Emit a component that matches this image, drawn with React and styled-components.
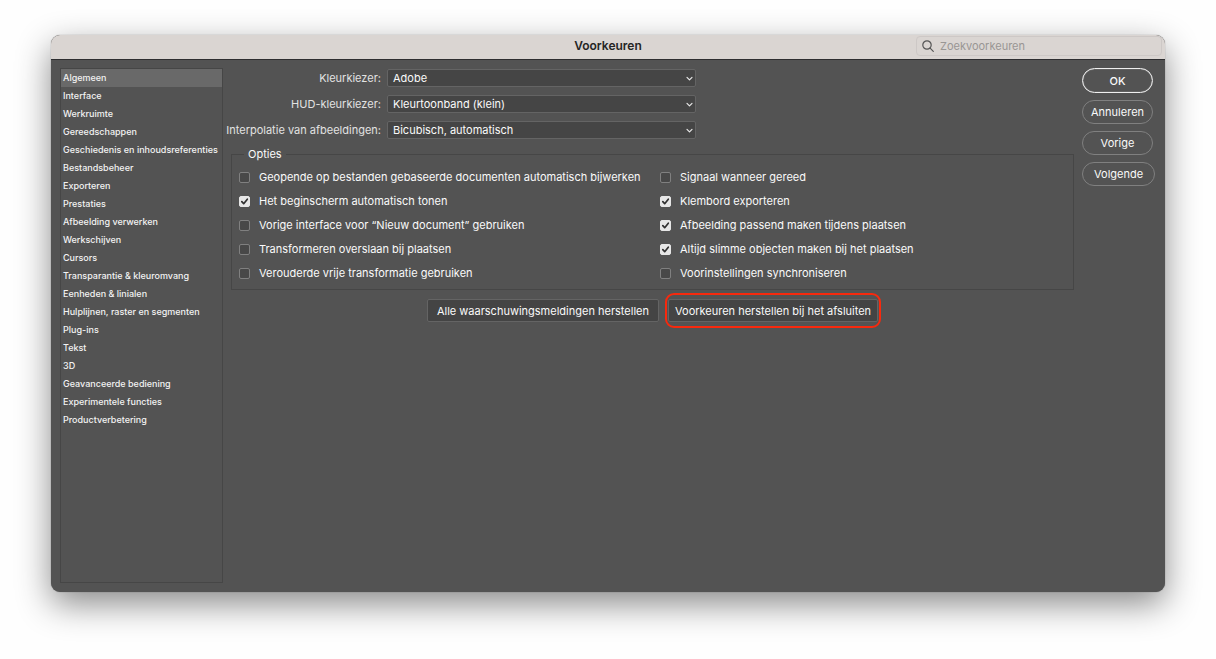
import React, { useState } from "react";
import styled, { createGlobalStyle, css } from "styled-components";

const GlobalStyle = createGlobalStyle`
  *, *::before, *::after { box-sizing: border-box; }
  body { margin: 0; background: #fefefe; }
  body, button, input, select { font-family: Inter, "Liberation Sans", sans-serif; }
`;

const Page = styled.div`
  display: flex;
  min-height: 100vh;
  padding: 35px 51px 67px;
`;

const Dialog = styled.main`
  flex: 1;
  display: flex;
  flex-direction: column;
  border-radius: 9px;
  background: #535353;
  color: #fafafa;
  font-size: 11px;
  font-weight: 400;
  line-height: 16px;
  box-shadow: 0 0 1px rgba(0, 0, 0, 0.5), 0 12px 34px rgba(0, 0, 0, 0.46);
`;

const TitleBar = styled.header`
  display: grid;
  grid-template-columns: 1fr auto 1fr;
  height: 25px;
  padding: 1px 3px 3px;
  border-bottom: 1px solid #2e2e30;
  border-radius: 9px 9px 0 0;
  background: #dad5d2;
`;

const Title = styled.h1`
  grid-column: 2;
  margin: 0;
  color: #252525;
  font-size: 12px;
  font-weight: 600;
  line-height: 20px;
`;

const Search = styled.label`
  justify-self: end;
  display: flex;
  align-items: center;
  gap: 6px;
  width: 246px;
  height: 20px;
  padding: 0 5px;
  border: 1px solid #cdc8c6;
  border-radius: 4px;
  color: #555;
`;

const SearchInput = styled.input`
  flex: 1;
  min-width: 0;
  padding: 0;
  border: 0;
  outline: 0;
  background: transparent;
  color: #333;
  font-size: 11px;
  line-height: 16px;
  &::placeholder { color: #999694; opacity: 1; }
`;

const Body = styled.div`
  flex: 1;
  display: flex;
  padding: 8px 9px 9px;
`;

const Sidebar = styled.nav`
  width: 163px;
  border: 1px solid #464646;
`;

const NavItem = styled.button`
  display: block;
  width: 100%;
  height: 18px;
  padding: 0 2px;
  border: 0;
  background: ${(p) => (p.$active ? "#696969" : "transparent")};
  color: #f2f2f2;
  font-size: 9px;
  font-weight: 500;
  line-height: 16px;
  text-align: left;
  white-space: nowrap;
`;

const Content = styled.div`
  flex: 1;
  min-width: 0;
  padding: 1px 8px 0;
`;

const Settings = styled.div`
  display: grid;
  grid-template-columns: 150px 309px;
  column-gap: 6px;
  row-gap: 8px;
`;

const SettingLabel = styled.label`
  justify-self: end;
  color: #e2e2e2;
  line-height: 18px;
  white-space: nowrap;
`;

const SelectBox = styled.div`
  position: relative;
  height: 18px;
  svg {
    position: absolute;
    right: 3px;
    top: 6px;
    pointer-events: none;
  }
`;

const Select = styled.select`
  appearance: none;
  display: block;
  width: 100%;
  height: 18px;
  padding: 0 16px 0 5px;
  border: 1px solid #646464;
  border-radius: 2px;
  background: #454545;
  color: #fafafa;
  font-size: 11px;
  font-weight: 400;
`;

const Options = styled.fieldset`
  display: grid;
  grid-template-columns: 1fr 1fr;
  column-gap: 8px;
  margin: 7px 0 0;
  padding: 7px 0 8px 7px;
  border: 1px solid #464646;
`;

const Legend = styled.legend`
  margin-left: 5px;
  padding: 0 4px;
`;

const Column = styled.div`
  display: flex;
  flex-direction: column;
  gap: 8px;
`;

const Option = styled.label`
  display: flex;
  align-items: center;
  gap: 9px;
  white-space: nowrap;
`;

const Tick = styled.span`
  display: grid;
  width: 11px;
  height: 11px;
  > * { grid-area: 1 / 1; }
  svg { visibility: hidden; pointer-events: none; z-index: 1; }
  input:checked + svg { visibility: visible; }
`;

const Checkbox = styled.input`
  appearance: none;
  width: 11px;
  height: 11px;
  margin: 0;
  border: 1px solid #808080;
  border-radius: 2px;
  background: #484848;
  &:checked { border-color: #e6e6e6; background: #e6e6e6; }
`;

const Actions = styled.div`
  display: flex;
  justify-content: center;
  gap: 9px;
  margin-top: 9px;
`;

const ResetButton = styled.button`
  position: relative;
  height: 23px;
  padding: 0 ${(p) => (p.$highlighted ? 6 : 9)}px;
  border: 1px solid #646464;
  border-radius: 2px;
  background: #444;
  color: #fafafa;
  font-size: 11px;
  font-weight: 400;
  white-space: nowrap;
  ${(p) =>
    p.$highlighted &&
    css`
      &::after {
        content: "";
        position: absolute;
        inset: -7px -4px;
        border: 2px solid #f8290d;
        border-radius: 9px;
      }
    `}
`;

const Commands = styled.div`
  display: flex;
  flex-direction: column;
  align-items: flex-start;
  gap: 7px;
  width: 74px;
`;

const Command = styled.button`
  min-width: 71px;
  height: ${(p) => (p.$primary ? 25 : 24)}px;
  padding: 0 ${(p) => (p.$tight ? 8 : 11)}px;
  border: 1px solid #808080;
  border-radius: 13px;
  background: transparent;
  color: #fafafa;
  font-size: 11px;
  font-weight: 400;
  ${(p) =>
    p.$primary &&
    css`
      border-color: #f0f0f0;
      box-shadow: inset 0 0 1px #f0f0f0;
      font-weight: 500;
    `}
`;

const sections = [
  "Algemeen", "Interface", "Werkruimte", "Gereedschappen",
  "Geschiedenis en inhoudsreferenties", "Bestandsbeheer", "Exporteren",
  "Prestaties", "Afbeelding verwerken", "Werkschijven", "Cursors",
  "Transparantie & kleuromvang", "Eenheden & linialen",
  "Hulplijnen, raster en segmenten", "Plug-ins", "Tekst", "3D",
  "Geavanceerde bediening", "Experimentele functies", "Productverbetering",
];

const settings = [
  ["picker", "Kleurkiezer:", "Adobe"],
  ["hud", "HUD-kleurkiezer:", "Kleurtoonband (klein)"],
  ["interpolation", "Interpolatie van afbeeldingen:", "Bicubisch, automatisch"],
];

const optionColumns = [
  [
    ["Geopende op bestanden gebaseerde documenten automatisch bijwerken", false],
    ["Het beginscherm automatisch tonen", true],
    ["Vorige interface voor “Nieuw document” gebruiken", false],
    ["Transformeren overslaan bij plaatsen", false],
    ["Verouderde vrije transformatie gebruiken", false],
  ],
  [
    ["Signaal wanneer gereed", false],
    ["Klembord exporteren", true],
    ["Afbeelding passend maken tijdens plaatsen", true],
    ["Altijd slimme objecten maken bij het plaatsen", true],
    ["Voorinstellingen synchroniseren", false],
  ],
];

export default function App() {
  const [active, setActive] = useState(sections[0]);
  return (
    <Page>
      <GlobalStyle />
      <Dialog>
        <TitleBar>
          <Title>Voorkeuren</Title>
          <Search>
            <svg width="12" height="12" viewBox="0 0 12 12" fill="none" stroke="currentColor" strokeWidth="1.2" strokeLinecap="round" aria-hidden="true">
              <circle cx="5" cy="5" r="4.2" />
              <path d="M8.1 8.1 11.3 11.3" />
            </svg>
            <SearchInput type="text" placeholder="Zoekvoorkeuren" aria-label="Zoekvoorkeuren" />
          </Search>
        </TitleBar>
        <Body>
          <Sidebar>
            {sections.map((name) => (
              <NavItem key={name} type="button" $active={name === active} onClick={() => setActive(name)}>
                {name}
              </NavItem>
            ))}
          </Sidebar>
          <Content>
            <Settings>
              {settings.map(([id, label, value]) => (
                <React.Fragment key={id}>
                  <SettingLabel htmlFor={id}>{label}</SettingLabel>
                  <SelectBox>
                    <Select id={id} defaultValue={value}>
                      <option>{value}</option>
                    </Select>
                    <svg width="7" height="7" viewBox="0 0 7 7" fill="none" stroke="#e8e8e8" strokeWidth="1.2" strokeLinecap="round" strokeLinejoin="round" aria-hidden="true">
                      <path d="M1 2.3 3.5 4.8 6 2.3" />
                    </svg>
                  </SelectBox>
                </React.Fragment>
              ))}
            </Settings>
            <Options>
              <Legend>Opties</Legend>
              {optionColumns.map((column, i) => (
                <Column key={i}>
                  {column.map(([label, checked]) => (
                    <Option key={label}>
                      <Tick>
                        <Checkbox type="checkbox" defaultChecked={checked} />
                        <svg width="11" height="11" viewBox="0 0 11 11" fill="none" stroke="#303030" strokeWidth="1.7" strokeLinecap="round" strokeLinejoin="round" aria-hidden="true">
                          <path d="M2.8 5.7 4.7 7.7 8.3 3.2" />
                        </svg>
                      </Tick>
                      {label}
                    </Option>
                  ))}
                </Column>
              ))}
            </Options>
            <Actions>
              <ResetButton type="button">Alle waarschuwingsmeldingen herstellen</ResetButton>
              <ResetButton type="button" $highlighted>Voorkeuren herstellen bij het afsluiten</ResetButton>
            </Actions>
          </Content>
          <Commands>
            <Command type="button" $primary>OK</Command>
            <Command type="button" $tight>Annuleren</Command>
            <Command type="button">Vorige</Command>
            <Command type="button">Volgende</Command>
          </Commands>
        </Body>
      </Dialog>
    </Page>
  );
}
